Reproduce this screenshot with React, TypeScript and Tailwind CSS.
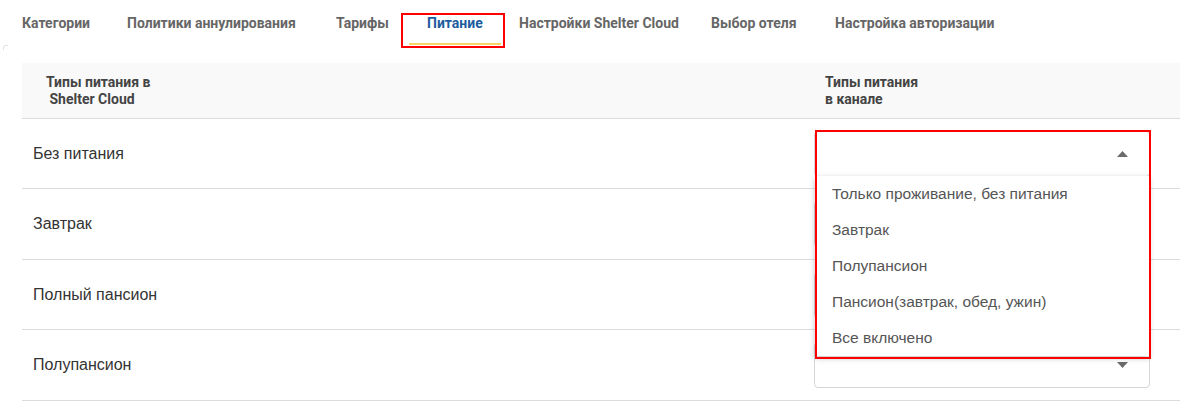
import React from "react";

const tabs = [
  { t: "Категории", w: "w-[105px]" },
  { t: "Политики аннулирования", w: "w-[209px]" },
  { t: "Тарифы", w: "w-[91px]" },
  { t: "Питание", w: "w-[92px]" },
  { t: "Настройки Shelter Cloud", w: "w-[192px]" },
  { t: "Выбор отеля", w: "w-[124px]" },
  { t: "Настройка авторизации", w: "w-[200px]" },
];

const rows = ["Без питания", "Завтрак", "Полный пансион", "Полупансион"];
const rowHeights = ["h-[70px]", "h-[71px]", "h-[70px]", "h-[71px]"];

const options = [
  "Только проживание, без питания",
  "Завтрак",
  "Полупансион",
  "Пансион(завтрак, обед, ужин)",
  "Все включено",
];

function Arrow({ up }: { up?: boolean }) {
  return (
    <svg width="11" height="6" viewBox="0 0 11 6">
      {up ? (
        <path d="M0 6 L5.5 0 L11 6 Z" fill="#6b6b6b" />
      ) : (
        <path d="M0 0 L5.5 6 L11 0 Z" fill="#6b6b6b" />
      )}
    </svg>
  );
}

export default function App() {
  return (
    <div className="relative w-[1180px] h-[407px] overflow-hidden bg-white">
      <div className="absolute left-[3px] top-[45px] w-[5px] h-[5px] border-l border-t border-[#e3e3e3] rounded-tl-[3px]" />
      <nav className="flex h-[48px] pl-[4px] font-['Roboto',sans-serif] text-[14px] font-bold">
        {tabs.map(({ t, w }) => {
          const active = t === "Питание";
          return (
            <div
              key={t}
              className={`relative flex h-full shrink-0 items-center ${w} pl-[18px] pb-[1px] whitespace-nowrap ${
                active ? "text-[#1d5c9e]" : "text-[#666666]"
              }`}
            >
              {t}
              {active && (
                <>
                  <div className="absolute left-0 right-0 bottom-[3px] h-[2px] bg-[#f8d564]" />
                  <div className="absolute -left-[8px] -right-[4px] top-[13px] bottom-0 border-2 border-[#ff0000]" />
                </>
              )}
            </div>
          );
        })}
      </nav>

      <div className="mt-[15px] ml-[22px]">
        <div className="flex h-[56px] bg-[#f9f9f9] border-b border-[#dcdcdc] font-['Roboto',sans-serif] text-[14px] font-bold leading-[17px] text-[#444444]">
          <div className="flex w-[792px] items-center pl-[24px]">
            <div>
              Типы питания в
              <br />
              {"\u00a0Shelter Cloud"}
            </div>
          </div>
          <div className="flex items-center pl-[11px]">
            <div>
              Типы питания
              <br />в канале
            </div>
          </div>
        </div>

        {rows.map((r, i) => (
          <div
            key={r}
            className={`flex items-center ${rowHeights[i]} border-b border-[#dcdcdc] font-['Liberation_Sans',Arial,sans-serif] text-[16px] text-[#333333]`}
          >
            <div className="w-[792px] pl-[11px]">{r}</div>
            <div className="relative flex h-[46px] w-[336px] items-center justify-end rounded-[4px] border border-[#d6d6d6] bg-white pr-[21px]">
              <Arrow up={i === 0} />
              {i === 0 && (
                <>
                  <div className="absolute left-0 right-0 top-[44px] z-10 bg-white shadow-[0_2px_6px_rgba(0,0,0,0.25)]">
                    {options.map((o) => (
                      <div
                        key={o}
                        className="flex h-[36px] items-center pl-[17px] text-[15.5px] text-[#555555]"
                      >
                        {o}
                      </div>
                    ))}
                  </div>
                  <div className="pointer-events-none absolute left-[0px] -top-[2px] z-20 h-[229px] w-[336px] border-2 border-[#ff0000]" />
                </>
              )}
            </div>
          </div>
        ))}
      </div>
    </div>
  );
}
